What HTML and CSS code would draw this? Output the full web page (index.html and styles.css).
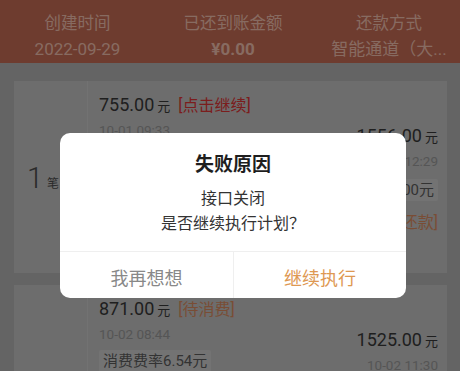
FILE: index.html
```html
<!DOCTYPE html>
<html lang="zh-CN">
<head>
<meta charset="utf-8">
<title>计划详情</title>
<link rel="stylesheet" href="styles.css">
</head>
<body>
<div class="page">
  <header class="summary">
    <div class="col">
      <div class="label">创建时间</div>
      <div class="value">2022-09-29</div>
    </div>
    <div class="col">
      <div class="label">已还到账金额</div>
      <div class="value strong">¥0.00</div>
    </div>
    <div class="col col-last">
      <div class="label">还款方式</div>
      <div class="value">智能通道（大...</div>
    </div>
  </header>

  <main class="list">
    <section class="card card-first">
      <div class="card-no"><div class="no-inner"><span class="num">1</span><span class="unit">笔</span></div></div>
      <div class="card-body">
        <div class="entry consume">
          <div class="amount-row"><span class="amount">755.00</span><span class="yuan">元</span><span class="status red">[点击继续]</span></div>
          <div class="time">10-01 09:33</div>
          <div class="tag">消费费率4.91元</div>
        </div>
        <div class="entry repay">
          <div class="amount-row"><span class="amount">1556.00</span><span class="yuan">元</span></div>
          <div class="time">10-01 12:29</div>
          <div class="tag">手续费10.00元</div>
          <div class="status orange">[待还款]</div>
        </div>
      </div>
    </section>

    <section class="card">
      <div class="card-no"><div class="no-inner"><span class="num">2</span><span class="unit">笔</span></div></div>
      <div class="card-body">
        <div class="entry consume">
          <div class="amount-row"><span class="amount">871.00</span><span class="yuan">元</span><span class="status orange">[待消费]</span></div>
          <div class="time">10-02 08:44</div>
          <div class="tag">消费费率6.54元</div>
        </div>
        <div class="entry repay">
          <div class="amount-row"><span class="amount">1525.00</span><span class="yuan">元</span></div>
          <div class="time">10-02 11:30</div>
          <div class="tag">手续费10.00元</div>
          <div class="status orange">[待还款]</div>
        </div>
      </div>
    </section>
  </main>
</div>

<div class="mask"></div>

<div class="dialog" role="dialog">
  <div class="dialog-content">
    <div class="dialog-title">失败原因</div>
    <div class="dialog-text">接口关闭<br>是否继续执行计划？</div>
  </div>
  <div class="dialog-actions">
    <button class="btn">我再想想</button>
    <button class="btn btn-primary">继续执行</button>
  </div>
</div>
</body>
</html>
```

FILE: styles.css
```css
html, body {
  margin: 0;
  padding: 0;
}

body {
  width: 460px;
  height: 371px;
  overflow: hidden;
  position: relative;
  background: #b6b6b6;
  font-family: Roboto, "Noto Sans CJK SC", sans-serif;
}

.summary {
  display: grid;
  grid-template-columns: 155px 156px 1fr;
  background: #c86d57;
  padding: 12px 0 2px;
}

.col {
  display: flex;
  flex-direction: column;
  align-items: center;
  gap: 1px;
  color: #f6c3b1;
  min-width: 0;
}

.col-last {
  padding-left: 7px;
}

.label {
  font-size: 16.5px;
  line-height: 24px;
}

.value {
  font-size: 17px;
  line-height: 24px;
  white-space: nowrap;
}

.value.strong {
  font-weight: bold;
}

.list {
  padding-top: 18px;
}

.card {
  display: flex;
  margin: 0 13px 12px 14px;
  background: #c6c6c6;
}

.card-no {
  width: 74px;
  box-sizing: border-box;
  flex: none;
  border-right: 1px solid #d0d0d0;
  display: flex;
  align-items: center;
  padding: 3px 0 0 13px;
}

.no-inner {
  display: flex;
  align-items: baseline;
  color: #4e4e4e;
}

.num {
  font-size: 29px;
  line-height: 1;
  font-weight: 300;
}

.unit {
  font-size: 12px;
  margin-left: 4px;
}

.card-body {
  flex: 1;
  display: flex;
  justify-content: space-between;
  padding: 11px 9px 39px 11px;
}

.entry {
  display: flex;
  flex-direction: column;
}

.consume {
  align-items: flex-start;
}

.repay {
  align-items: flex-end;
  padding-top: 31px;
}

.amount-row {
  display: flex;
  align-items: baseline;
  line-height: 26px;
  color: #3a3a3a;
  white-space: nowrap;
}

.amount {
  font-size: 18px;
}

.yuan {
  font-size: 13px;
  margin-left: 3px;
}

.status {
  font-size: 16px;
  margin-left: 8px;
  white-space: nowrap;
}

.red {
  color: #e03636;
}

.orange {
  color: #dd8d62;
}

.time {
  font-size: 13.5px;
  line-height: 20px;
  color: #9c9c9c;
}

.tag {
  margin-top: 6px;
  height: 22px;
  line-height: 22px;
  padding: 0 4px;
  font-size: 15px;
  background: #d2d2d2;
  color: #5e5e5e;
  border-radius: 2px;
  white-space: nowrap;
}

.repay .tag {
  margin-top: 8px;
}

.repay .status {
  margin: 11px 0 0;
  line-height: 22px;
}

.mask {
  position: absolute;
  inset: 0;
  background: rgba(0, 0, 0, 0.45);
}

.dialog {
  position: absolute;
  left: 60px;
  top: 133px;
  width: 346px;
  background: #fff;
  border-radius: 10px;
  overflow: hidden;
}

.dialog-content {
  padding: 19px 16px 15px;
  text-align: center;
}

.dialog-title {
  font-size: 19px;
  font-weight: bold;
  line-height: 26px;
  color: #1e1e1e;
}

.dialog-text {
  margin-top: 8px;
  font-size: 16px;
  line-height: 25px;
  color: #333;
}

.dialog-actions {
  display: grid;
  grid-template-columns: 1fr 1fr;
  border-top: 1px solid #efefef;
  height: 46px;
}

.btn {
  display: flex;
  align-items: center;
  justify-content: center;
  padding: 3px 0 0;
  margin: 0;
  border: 0;
  background: none;
  font-family: inherit;
  font-size: 18px;
  color: #888;
}

.btn + .btn {
  border-left: 1px solid #efefef;
}

.btn-primary {
  color: #de9852;
}
```
